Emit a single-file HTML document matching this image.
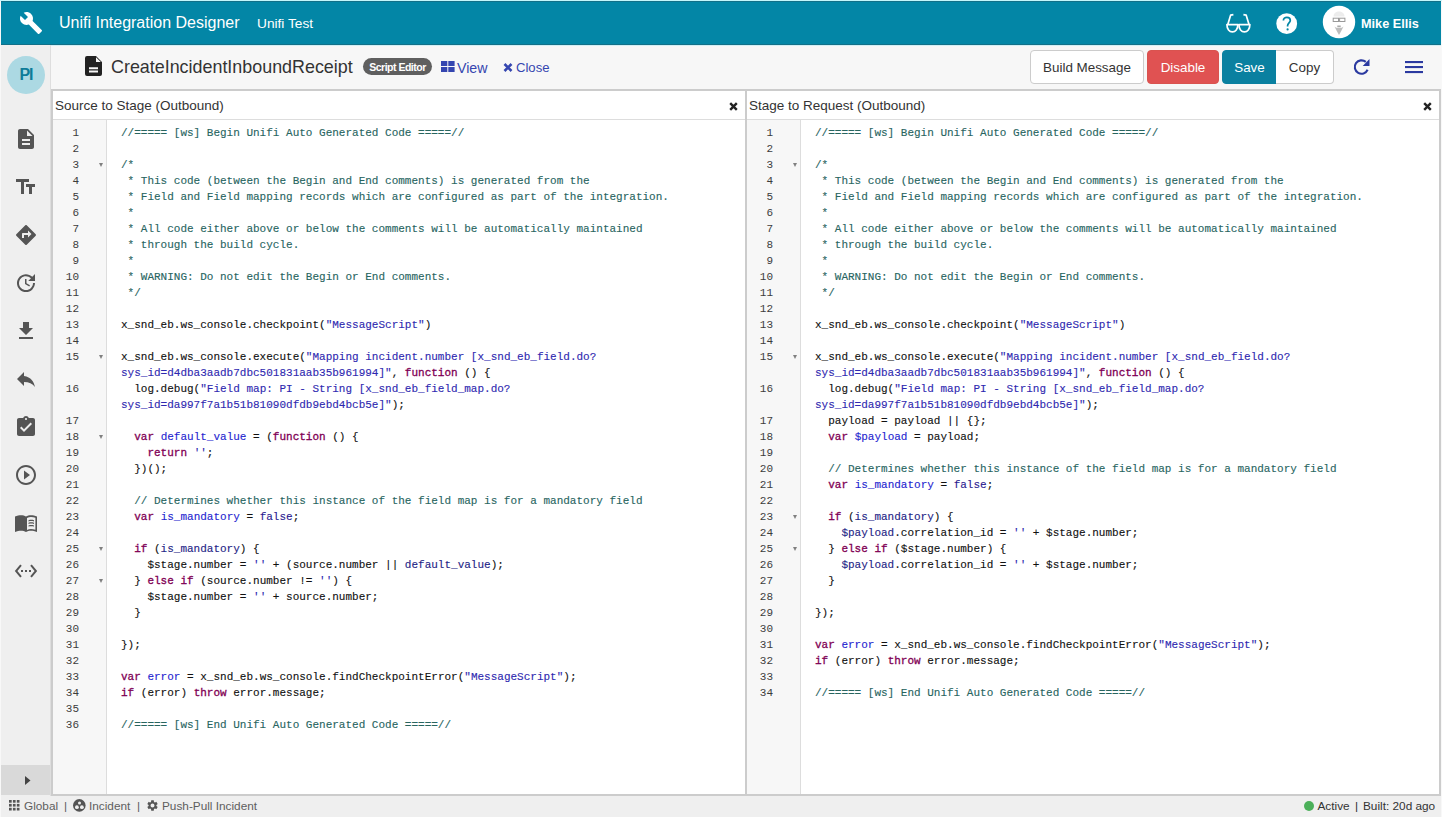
<!DOCTYPE html>
<html><head><meta charset="utf-8">
<style>
*{box-sizing:border-box;margin:0;padding:0}
html,body{width:1442px;height:817px;overflow:hidden}
body{position:relative;background:#f8f8f8;font-family:"Liberation Sans",sans-serif;color:#333}
.abs{position:absolute}
#top{position:absolute;left:1px;top:1px;width:1440px;height:44px;background:#0386a6;box-shadow:inset 0 1px 0 #127088,inset 0 -1px 0 #127088}
#side{position:absolute;left:1px;top:45px;width:50px;height:751px;background:#efefef;border-right:1px solid #dedede}
#hdr{position:absolute;left:51px;top:45px;width:1390px;height:44px;background:#f7f7f7}
#status{position:absolute;left:1px;top:796px;width:1440px;height:21px;background:#efefef}
#ed{position:absolute;left:51px;top:89px;width:1390px;height:707px;background:#ccc}
.pane{position:absolute;top:91px;height:703px;background:#fff;overflow:hidden}
.ph{position:absolute;left:0;top:0;right:0;height:29px;border-bottom:1px solid #ddd;background:#fff}
.pt{position:absolute;left:2px;top:6.5px;font-size:13.5px;color:#333;white-space:nowrap}
.px{position:absolute;top:11px;width:9px;height:9px}
.gut{position:absolute;left:0;top:29px;width:54px;bottom:0;background:#f7f7f7;border-right:1px solid #ddd}
.ln,.cl{position:absolute;height:16px;line-height:16px;font-family:"Liberation Mono",monospace;font-size:11px;white-space:pre}
.ln{right:28px;width:26px;text-align:right;color:#3c3c3c}
.cl{color:#111;-webkit-text-stroke-width:0.12px}
.fd{position:absolute;left:46px;width:0;height:0;margin-top:6px;border-left:2.5px solid transparent;border-right:2.5px solid transparent;border-top:4px solid #808080}
.k{color:#7F0055;-webkit-text-stroke:0.3px #7F0055}
.d{color:#1f1fd0}
.v{color:#1e1e86}
.s{color:#2e28b0}
.c{color:#28655f}
.a{color:#2a1a90}
.si{position:absolute;left:14px}
.btn{position:absolute;top:50px;height:34px;padding-top:1px;font-size:13.4px;line-height:32px;text-align:center;border-radius:4px;white-space:nowrap}
.st{position:absolute;top:799px;font-size:11.8px;line-height:14px;color:#5e5e5e;white-space:nowrap}
</style></head><body>
<div id="top">
  <svg class="abs" style="left:18px;top:9.5px" width="24" height="24" viewBox="0 0 24 24"><path fill="#fff" d="M22.7,19L13.6,9.9C14.5,7.6 14,4.9 12.1,3C10.1,1 7.1,0.6 4.7,1.7L9,6L6,9L1.6,4.7C0.4,7.1 0.9,10.1 2.9,12.1C4.8,14 7.5,14.5 9.8,13.6L18.9,22.7C19.3,23.1 19.9,23.1 20.3,22.7L22.6,20.4C23.1,20 23.1,19.3 22.7,19Z"/></svg>
  <div class="abs" style="left:58px;top:13px;font-size:16px;color:#fff;white-space:nowrap">Unifi Integration Designer</div>
  <div class="abs" style="left:256px;top:15px;font-size:13.7px;color:#fff;white-space:nowrap">Unifi Test</div>
  <svg class="abs" style="left:1224px;top:11px" width="27" height="22" viewBox="0 0 27 22"><g fill="none" stroke="#fff" stroke-width="1.7" stroke-linejoin="round"><path d="M1.9 12.6H12.9C12.9 17 10.4 19.9 7.4 19.9C4.4 19.9 1.9 17 1.9 12.6Z"/><path d="M13.9 12.6H24.9C24.9 17 22.4 19.9 19.4 19.9C16.4 19.9 13.9 17 13.9 12.6Z"/><path d="M2.8 12.6L5.6 3.2L8.4 2.7"/><path d="M24 12.6L21.2 3.2L18.4 2.7"/></g></svg>
  <svg class="abs" style="left:1274px;top:10.5px" width="23" height="23" viewBox="0 0 23 23"><circle cx="11.7" cy="11.7" r="10.4" fill="#fff"/><path d="M8.4 8.6C8.4 6.4 10 5.3 11.9 5.3C13.9 5.3 15.3 6.6 15.3 8.4C15.3 10.6 12.6 11.2 12.6 13.6V14.6" fill="none" stroke="#0386a6" stroke-width="1.7"/><circle cx="12.6" cy="17.4" r="1.1" fill="#0386a6"/></svg>
  <svg class="abs" style="left:1321px;top:4px" width="34" height="34" viewBox="0 0 34 34"><circle cx="17" cy="17" r="16.2" fill="#fff"/><path d="M11.5 11.5C11.5 4.8 22.5 4.8 22.5 11.5Z" fill="#ececec"/><g fill="none" stroke="#999" stroke-width="1"><rect x="11.2" y="13.2" width="5.3" height="3.3"/><rect x="17.6" y="13.2" width="5.3" height="3.3"/></g><path d="M12.5 21.5C14 24.5 15.5 27.5 17 30C18.5 27.5 20 24.5 21.5 21.5C19.5 23.5 14.5 23.5 12.5 21.5Z" fill="#bdbdbd"/><rect x="15.3" y="20.5" width="3.4" height="1.8" fill="#aaa"/></svg>
  <div class="abs" style="left:1360px;top:16px;font-size:12.7px;font-weight:bold;color:#fff;white-space:nowrap">Mike Ellis</div>
</div>
<div class="abs" style="left:0;top:0;width:1442px;height:1px;background:#c4f6fb"></div>
<div id="side">
  <div class="abs" style="left:6px;top:11px;width:38px;height:38px;border-radius:50%;background:#acd9e3"></div>
  <div class="abs" style="left:6px;top:21px;width:38px;text-align:center;font-size:16px;font-weight:bold;color:#0e7c99;letter-spacing:-1px">PI</div>
</div>
<svg class="si" style="top:127px" width="24" height="24" viewBox="0 0 24 24"><path d="M14 2H6c-1.1 0-1.99.9-1.99 2L4 20c0 1.1.89 2 1.99 2H18c1.1 0 2-.9 2-2V8l-6-6zm2 16H8v-2h8v2zm0-4H8v-2h8v2zm-3-5V3.5L18.5 9H13z" fill="#555555" fill-rule="evenodd"/></svg>
<svg class="si" style="top:175px" width="24" height="24" viewBox="0 0 24 24"><path d="M2 4V7H7V19H10V7H15V4H2M21 9H12V12H15V19H18V12H21V9Z" fill="#555555" fill-rule="evenodd"/></svg>
<svg class="si" style="top:223px" width="24" height="24" viewBox="0 0 24 24"><path d="M21.71 11.29l-9-9c-.39-.39-1.02-.39-1.41 0l-9 9c-.39.39-.39 1.02 0 1.41l9 9c.39.39 1.02.39 1.41 0l9-9c.39-.38.39-1.01 0-1.41zM14 14.5V12h-4v3H8v-4c0-.55.45-1 1-1h5V7.5l3.5 3.5-3.5 3.5z" fill="#555555" fill-rule="evenodd"/></svg>
<svg class="si" style="top:271px" width="24" height="24" viewBox="0 0 24 24"><path d="M21 10.12h-6.78l2.74-2.82c-2.73-2.7-7.15-2.8-9.88-.1-2.73 2.71-2.73 7.08 0 9.79s7.150 2.71 9.88 0C18.32 15.65 19 14.08 19 12.1h2c0 1.98-.88 4.55-2.64 6.29-3.51 3.48-9.21 3.48-12.72 0-3.5-3.47-3.53-9.11-.02-12.58s9.14-3.47 12.65 0L21 3v7.12zM12.5 8v4.25l3.5 2.08-.72 1.21L11 13V8h1.5z" fill="#555555" fill-rule="evenodd"/></svg>
<svg class="si" style="top:319px" width="24" height="24" viewBox="0 0 24 24"><path d="M19 9h-4V3H9v6H5l7 7 7-7zM5 18v2h14v-2H5z" fill="#555555" fill-rule="evenodd"/></svg>
<svg class="si" style="top:367px" width="24" height="24" viewBox="0 0 24 24"><path d="M10 9V5l-7 7 7 7v-4.1c5 0 8.5 1.6 11 5.1-1-5-4-10-11-11z" fill="#555555" fill-rule="evenodd"/></svg>
<svg class="si" style="top:415px" width="24" height="24" viewBox="0 0 24 24"><path d="M19 3h-4.18C14.4 1.84 13.3 1 12 1c-1.3 0-2.4.84-2.82 2H5c-1.1 0-2 .9-2 2v14c0 1.1.9 2 2 2h14c1.1 0 2-.9 2-2V5c0-1.1-.9-2-2-2zm-7 0c.55 0 1 .45 1 1s-.45 1-1 1-1-.45-1-1 .45-1 1-1zm-2 14l-4-4 1.41-1.41L10 14.17l6.59-6.59L18 9l-8 8z" fill="#555555" fill-rule="evenodd"/></svg>
<svg class="si" style="top:463px" width="24" height="24" viewBox="0 0 24 24"><path d="M10 16.5l6-4.5-6-4.5v9zM12 2C6.48 2 2 6.48 2 12s4.48 10 10 10 10-4.48 10-10S17.52 2 12 2zm0 18c-4.41 0-8-3.59-8-8s3.59-8 8-8 8 3.59 8 8-3.59 8-8 8z" fill="#555555" fill-rule="evenodd"/></svg>
<svg class="si" style="top:511px" width="24" height="24" viewBox="0 0 24 24"><path d="M1 5.5C3 4.6 5.2 4.3 7 4.3c1.8 0 3.7.4 5 1.3 1.3-.9 3.2-1.3 5-1.3 1.8 0 4 .3 6 1.2V21c-2-.9-4.2-1.2-6-1.2-1.8 0-3.7.4-5 1.3-1.3-.9-3.2-1.3-5-1.3-1.8 0-4 .3-6 1.2V5.5zM13 7v11.9c1.2-.6 2.7-.9 4-.9 1.5 0 3 .2 4.4.7V6.8C20 6.3 18.5 6.1 17 6.1c-1.3 0-2.8.3-4 .9zM14.5 9.2c1.9-.6 3.6-.6 5.5 0v1.2c-1.9-.6-3.6-.6-5.5 0zm0 2.6c1.9-.6 3.6-.6 5.5 0V13c-1.9-.6-3.6-.6-5.5 0zm0 2.6c1.9-.6 3.6-.6 5.5 0v1.2c-1.9-.6-3.6-.6-5.5 0z" fill="#555555" fill-rule="evenodd"/></svg>
<svg class="si" style="top:559px" width="24" height="24" viewBox="0 0 24 24"><path d="M7.77 6.76L6.23 5.48.82 12l5.41 6.52 1.54-1.28L3.42 12l4.35-5.24zM7 13h2v-2H7v2zm10-2h-2v2h2v-2zm-6 2h2v-2h-2v2zm6.77-7.52l-1.54 1.28L20.58 12l-4.35 5.24 1.54 1.28L23.18 12l-5.41-6.52z" fill="#555555" fill-rule="evenodd"/></svg>
<div id="hdr"></div>
<div class="abs" style="left:51px;top:45px;width:1390px;height:1px;background:#d2eff5"></div>
<svg class="abs" style="left:85px;top:56px" width="17" height="20" viewBox="0 0 17 20"><path fill="#222" fill-rule="evenodd" d="M2 0H11L17 6V18A2 2 0 0 1 15 20H2A2 2 0 0 1 0 18V2A2 2 0 0 1 2 0ZM11 1.2V6H15.8ZM4 11.2H13V13.2H4ZM4 14.6H13V16.6H4Z"/></svg>
<div class="abs" style="left:111px;top:57px;font-size:17.9px;color:#333;white-space:nowrap">CreateIncidentInboundReceipt</div>
<div class="abs" style="left:363px;top:58px;width:69px;height:17px;border-radius:9px;background:#5f5f5f;color:#fff;font-weight:bold;font-size:10.5px;letter-spacing:-0.5px;line-height:18px;text-align:center;white-space:nowrap">Script Editor</div>
<svg class="abs" style="left:441px;top:61px" width="14" height="11" viewBox="0 0 14 11"><g fill="#3546b0"><rect x="0" y="0" width="6.3" height="5"/><rect x="7.3" y="0" width="6.3" height="5"/><rect x="0" y="6" width="6.3" height="5"/><rect x="7.3" y="6" width="6.3" height="5"/></g></svg>
<div class="abs" style="left:457px;top:59.5px;font-size:14.2px;color:#3546b0;white-space:nowrap">View</div>
<svg class="abs" style="left:503px;top:63px" width="10" height="9" viewBox="0 0 10 9"><path d="M1.5 1L8.5 8M8.5 1L1.5 8" stroke="#3546b0" stroke-width="2.6"/></svg>
<div class="abs" style="left:516px;top:59.5px;font-size:13.1px;color:#3546b0;white-space:nowrap">Close</div>
<div class="btn" style="left:1030px;width:114px;background:#fff;border:1px solid #ccc;color:#333">Build Message</div>
<div class="btn" style="left:1147px;width:72px;background:#e05252;border:1px solid #d9534f;color:#fff">Disable</div>
<div class="btn" style="left:1222px;width:55px;background:#0a80a0;border:1px solid #0a80a0;color:#fff;border-radius:4px 0 0 4px">Save</div>
<div class="btn" style="left:1276px;width:58px;background:#fff;border:1px solid #ccc;border-left:none;color:#333;border-radius:0 4px 4px 0">Copy</div>
<svg class="abs" style="left:1351px;top:57px" width="20" height="20" viewBox="0 0 20 20"><path fill="none" stroke="#2b3aa0" stroke-width="2.1" d="M14.8 4.9A6.7 6.7 0 1 0 16.6 12.8"/><path fill="#2b3aa0" d="M11.7 8.9L18.5 8.9L18.5 2.1Z"/></svg>
<svg class="abs" style="left:1405px;top:60px" width="19" height="14" viewBox="0 0 19 14"><g fill="#2b3aa0"><rect x="0" y="1" width="18" height="2.1"/><rect x="0" y="6" width="18" height="2.1"/><rect x="0" y="11" width="18" height="2.1"/></g></svg>
<div id="ed"></div>
<div class="pane" style="left:53px;width:692px">
  <div class="ph"><div class="pt">Source to Stage (Outbound)</div><svg class="px" style="left:676px" viewBox="0 0 9 9"><path d="M1.2 1.2L7.8 7.8M7.8 1.2L1.2 7.8" stroke="#222" stroke-width="2.4"/></svg></div>
  <div class="gut"></div>
</div>
<div class="pane" style="left:747px;width:692px">
  <div class="ph"><div class="pt">Stage to Request (Outbound)</div><svg class="px" style="left:676px" viewBox="0 0 9 9"><path d="M1.2 1.2L7.8 7.8M7.8 1.2L1.2 7.8" stroke="#222" stroke-width="2.4"/></svg></div>
  <div class="gut"></div>
</div>
<div id="lcode">
<div class="abs" style="left:53px;top:0;width:54px">
<div class="ln" style="top:125px">1</div>
<div class="ln" style="top:141px">2</div>
<div class="ln" style="top:157px">3</div>
<div class="fd" style="top:157px"></div>
<div class="ln" style="top:173px">4</div>
<div class="ln" style="top:189px">5</div>
<div class="ln" style="top:205px">6</div>
<div class="ln" style="top:221px">7</div>
<div class="ln" style="top:237px">8</div>
<div class="ln" style="top:253px">9</div>
<div class="ln" style="top:269px">10</div>
<div class="ln" style="top:285px">11</div>
<div class="ln" style="top:301px">12</div>
<div class="ln" style="top:317px">13</div>
<div class="ln" style="top:333px">14</div>
<div class="ln" style="top:349px">15</div>
<div class="fd" style="top:349px"></div>
<div class="ln" style="top:381px">16</div>
<div class="ln" style="top:413px">17</div>
<div class="ln" style="top:429px">18</div>
<div class="fd" style="top:429px"></div>
<div class="ln" style="top:445px">19</div>
<div class="ln" style="top:461px">20</div>
<div class="ln" style="top:477px">21</div>
<div class="ln" style="top:493px">22</div>
<div class="ln" style="top:509px">23</div>
<div class="ln" style="top:525px">24</div>
<div class="ln" style="top:541px">25</div>
<div class="fd" style="top:541px"></div>
<div class="ln" style="top:557px">26</div>
<div class="ln" style="top:573px">27</div>
<div class="fd" style="top:573px"></div>
<div class="ln" style="top:589px">28</div>
<div class="ln" style="top:605px">29</div>
<div class="ln" style="top:621px">30</div>
<div class="ln" style="top:637px">31</div>
<div class="ln" style="top:653px">32</div>
<div class="ln" style="top:669px">33</div>
<div class="ln" style="top:685px">34</div>
<div class="ln" style="top:701px">35</div>
<div class="ln" style="top:717px">36</div>
</div>
<div class="abs" style="left:121px;top:0">
<div class="cl" style="top:125px"><span class="c">//===== [ws] Begin Unifi Auto Generated Code =====//</span></div>
<div class="cl" style="top:157px"><span class="c">/*</span></div>
<div class="cl" style="top:173px"><span class="c"> * This code (between the Begin and End comments) is generated from the</span></div>
<div class="cl" style="top:189px"><span class="c"> * Field and Field mapping records which are configured as part of the integration.</span></div>
<div class="cl" style="top:205px"><span class="c"> *</span></div>
<div class="cl" style="top:221px"><span class="c"> * All code either above or below the comments will be automatically maintained</span></div>
<div class="cl" style="top:237px"><span class="c"> * through the build cycle.</span></div>
<div class="cl" style="top:253px"><span class="c"> *</span></div>
<div class="cl" style="top:269px"><span class="c"> * WARNING: Do not edit the Begin or End comments.</span></div>
<div class="cl" style="top:285px"><span class="c"> */</span></div>
<div class="cl" style="top:317px">x_snd_eb.ws_console.checkpoint(<span class="s">"MessageScript"</span>)</div>
<div class="cl" style="top:349px">x_snd_eb.ws_console.execute(<span class="s">"Mapping incident.number [x_snd_eb_field.do?</span></div>
<div class="cl" style="top:365px"><span class="s">sys_id=d4dba3aadb7dbc501831aab35b961994]"</span>, <span class="k">function</span> () {</div>
<div class="cl" style="top:381px">  log.debug(<span class="s">"Field map: PI - String [x_snd_eb_field_map.do?</span></div>
<div class="cl" style="top:397px"><span class="s">sys_id=da997f7a1b51b81090dfdb9ebd4bcb5e]"</span>);</div>
<div class="cl" style="top:429px">  <span class="k">var</span> <span class="d">default_value</span> = (<span class="k">function</span> () {</div>
<div class="cl" style="top:445px">    <span class="k">return</span> <span class="s">''</span>;</div>
<div class="cl" style="top:461px">  })();</div>
<div class="cl" style="top:493px">  <span class="c">// Determines whether this instance of the field map is for a mandatory field</span></div>
<div class="cl" style="top:509px">  <span class="k">var</span> <span class="d">is_mandatory</span> = <span class="a">false</span>;</div>
<div class="cl" style="top:541px">  <span class="k">if</span> (<span class="v">is_mandatory</span>) {</div>
<div class="cl" style="top:557px">    $stage.number = <span class="s">''</span> + (source.number || <span class="v">default_value</span>);</div>
<div class="cl" style="top:573px">  } <span class="k">else</span> <span class="k">if</span> (source.number != <span class="s">''</span>) {</div>
<div class="cl" style="top:589px">    $stage.number = <span class="s">''</span> + source.number;</div>
<div class="cl" style="top:605px">  }</div>
<div class="cl" style="top:637px">});</div>
<div class="cl" style="top:669px"><span class="k">var</span> <span class="d">error</span> = x_snd_eb.ws_console.findCheckpointError(<span class="s">"MessageScript"</span>);</div>
<div class="cl" style="top:685px"><span class="k">if</span> (error) <span class="k">throw</span> error.message;</div>
<div class="cl" style="top:717px"><span class="c">//===== [ws] End Unifi Auto Generated Code =====//</span></div>
</div>
</div>
<div id="rcode">
<div class="abs" style="left:747px;top:0;width:54px">
<div class="ln" style="top:125px">1</div>
<div class="ln" style="top:141px">2</div>
<div class="ln" style="top:157px">3</div>
<div class="fd" style="top:157px"></div>
<div class="ln" style="top:173px">4</div>
<div class="ln" style="top:189px">5</div>
<div class="ln" style="top:205px">6</div>
<div class="ln" style="top:221px">7</div>
<div class="ln" style="top:237px">8</div>
<div class="ln" style="top:253px">9</div>
<div class="ln" style="top:269px">10</div>
<div class="ln" style="top:285px">11</div>
<div class="ln" style="top:301px">12</div>
<div class="ln" style="top:317px">13</div>
<div class="ln" style="top:333px">14</div>
<div class="ln" style="top:349px">15</div>
<div class="fd" style="top:349px"></div>
<div class="ln" style="top:381px">16</div>
<div class="ln" style="top:413px">17</div>
<div class="ln" style="top:429px">18</div>
<div class="ln" style="top:445px">19</div>
<div class="ln" style="top:461px">20</div>
<div class="ln" style="top:477px">21</div>
<div class="ln" style="top:493px">22</div>
<div class="ln" style="top:509px">23</div>
<div class="fd" style="top:509px"></div>
<div class="ln" style="top:525px">24</div>
<div class="ln" style="top:541px">25</div>
<div class="fd" style="top:541px"></div>
<div class="ln" style="top:557px">26</div>
<div class="ln" style="top:573px">27</div>
<div class="ln" style="top:589px">28</div>
<div class="ln" style="top:605px">29</div>
<div class="ln" style="top:621px">30</div>
<div class="ln" style="top:637px">31</div>
<div class="ln" style="top:653px">32</div>
<div class="ln" style="top:669px">33</div>
<div class="ln" style="top:685px">34</div>
</div>
<div class="abs" style="left:815px;top:0">
<div class="cl" style="top:125px"><span class="c">//===== [ws] Begin Unifi Auto Generated Code =====//</span></div>
<div class="cl" style="top:157px"><span class="c">/*</span></div>
<div class="cl" style="top:173px"><span class="c"> * This code (between the Begin and End comments) is generated from the</span></div>
<div class="cl" style="top:189px"><span class="c"> * Field and Field mapping records which are configured as part of the integration.</span></div>
<div class="cl" style="top:205px"><span class="c"> *</span></div>
<div class="cl" style="top:221px"><span class="c"> * All code either above or below the comments will be automatically maintained</span></div>
<div class="cl" style="top:237px"><span class="c"> * through the build cycle.</span></div>
<div class="cl" style="top:253px"><span class="c"> *</span></div>
<div class="cl" style="top:269px"><span class="c"> * WARNING: Do not edit the Begin or End comments.</span></div>
<div class="cl" style="top:285px"><span class="c"> */</span></div>
<div class="cl" style="top:317px">x_snd_eb.ws_console.checkpoint(<span class="s">"MessageScript"</span>)</div>
<div class="cl" style="top:349px">x_snd_eb.ws_console.execute(<span class="s">"Mapping incident.number [x_snd_eb_field.do?</span></div>
<div class="cl" style="top:365px"><span class="s">sys_id=d4dba3aadb7dbc501831aab35b961994]"</span>, <span class="k">function</span> () {</div>
<div class="cl" style="top:381px">  log.debug(<span class="s">"Field map: PI - String [x_snd_eb_field_map.do?</span></div>
<div class="cl" style="top:397px"><span class="s">sys_id=da997f7a1b51b81090dfdb9ebd4bcb5e]"</span>);</div>
<div class="cl" style="top:413px">  payload = payload || {};</div>
<div class="cl" style="top:429px">  <span class="k">var</span> <span class="d">$payload</span> = payload;</div>
<div class="cl" style="top:461px">  <span class="c">// Determines whether this instance of the field map is for a mandatory field</span></div>
<div class="cl" style="top:477px">  <span class="k">var</span> <span class="d">is_mandatory</span> = <span class="a">false</span>;</div>
<div class="cl" style="top:509px">  <span class="k">if</span> (<span class="v">is_mandatory</span>) {</div>
<div class="cl" style="top:525px">    <span class="v">$payload</span>.correlation_id = <span class="s">''</span> + $stage.number;</div>
<div class="cl" style="top:541px">  } <span class="k">else</span> <span class="k">if</span> ($stage.number) {</div>
<div class="cl" style="top:557px">    <span class="v">$payload</span>.correlation_id = <span class="s">''</span> + $stage.number;</div>
<div class="cl" style="top:573px">  }</div>
<div class="cl" style="top:605px">});</div>
<div class="cl" style="top:637px"><span class="k">var</span> <span class="d">error</span> = x_snd_eb.ws_console.findCheckpointError(<span class="s">"MessageScript"</span>);</div>
<div class="cl" style="top:653px"><span class="k">if</span> (error) <span class="k">throw</span> error.message;</div>
<div class="cl" style="top:685px"><span class="c">//===== [ws] End Unifi Auto Generated Code =====//</span></div>
</div>
</div>
<div class="abs" style="left:1px;top:765px;width:49px;height:30px;background:#d9d9d9"></div>
<svg class="abs" style="left:25px;top:776px" width="6" height="9" viewBox="0 0 6 9"><path d="M0 0L5.5 4.5L0 9Z" fill="#444"/></svg>
<div id="status"></div>
<svg class="abs" style="left:9px;top:800px" width="11" height="11" viewBox="0 0 11 11"><g fill="#555">
<rect x="0" y="0" width="2.7" height="2.7"/><rect x="3.9" y="0" width="2.7" height="2.7"/><rect x="7.8" y="0" width="2.7" height="2.7"/>
<rect x="0" y="3.9" width="2.7" height="2.7"/><rect x="3.9" y="3.9" width="2.7" height="2.7"/><rect x="7.8" y="3.9" width="2.7" height="2.7"/>
<rect x="0" y="7.8" width="2.7" height="2.7"/><rect x="3.9" y="7.8" width="2.7" height="2.7"/><rect x="7.8" y="7.8" width="2.7" height="2.7"/></g></svg>
<div class="st" style="left:24px">Global</div>
<div class="st" style="left:64px">|</div>
<svg class="abs" style="left:73px;top:799px" width="13" height="13" viewBox="0 0 13 13"><circle cx="6.3" cy="6.4" r="6.3" fill="#555"/><g fill="#efefef"><circle cx="6.5" cy="3.9" r="1.5"/><circle cx="3.9" cy="8.2" r="1.9"/><circle cx="8.9" cy="8.2" r="1.9"/></g></svg>
<div class="st" style="left:89px">Incident</div>
<div class="st" style="left:137px">|</div>
<svg class="abs" style="left:146px;top:799px" width="13" height="13" viewBox="0 0 24 24"><path fill="#555" d="M19.14 12.94c.04-.3.06-.61.06-.94 0-.32-.02-.64-.07-.94l2.03-1.58c.18-.14.23-.41.12-.61l-1.92-3.32c-.12-.22-.37-.29-.59-.22l-2.39.96c-.5-.38-1.03-.7-1.62-.94l-.36-2.54c-.04-.24-.24-.41-.48-.41h-3.84c-.24 0-.43.17-.47.41l-.36 2.54c-.59.24-1.13.57-1.62.94l-2.39-.96c-.22-.08-.47 0-.59.22L2.74 8.87c-.12.21-.08.47.12.61l2.03 1.58c-.05.3-.09.63-.09.94s.02.64.07.94l-2.03 1.58c-.18.14-.23.41-.12.61l1.92 3.32c.12.22.37.29.59.22l2.39-.96c.5.38 1.03.7 1.62.94l.36 2.54c.05.24.24.41.48.41h3.84c.24 0 .44-.17.47-.41l.36-2.54c.59-.24 1.13-.56 1.62-.94l2.39.96c.22.08.47 0 .59-.22l1.92-3.32c.12-.22.07-.47-.12-.61l-2.01-1.58zM12 15.6c-1.98 0-3.6-1.62-3.6-3.6s1.62-3.6 3.6-3.6 3.6 1.62 3.6 3.6-1.62 3.6-3.6 3.6z"/></svg>
<div class="st" style="left:162px">Push-Pull Incident</div>
<div class="abs" style="left:1303.5px;top:800.5px;width:10.5px;height:10.5px;border-radius:50%;background:#4cb05a"></div>
<div class="st" style="left:1317.5px;color:#333">Active</div>
<div class="st" style="left:1355px;color:#333">|</div>
<div class="st" style="left:1363px;color:#333">Built: 20d ago</div>
</body></html>
